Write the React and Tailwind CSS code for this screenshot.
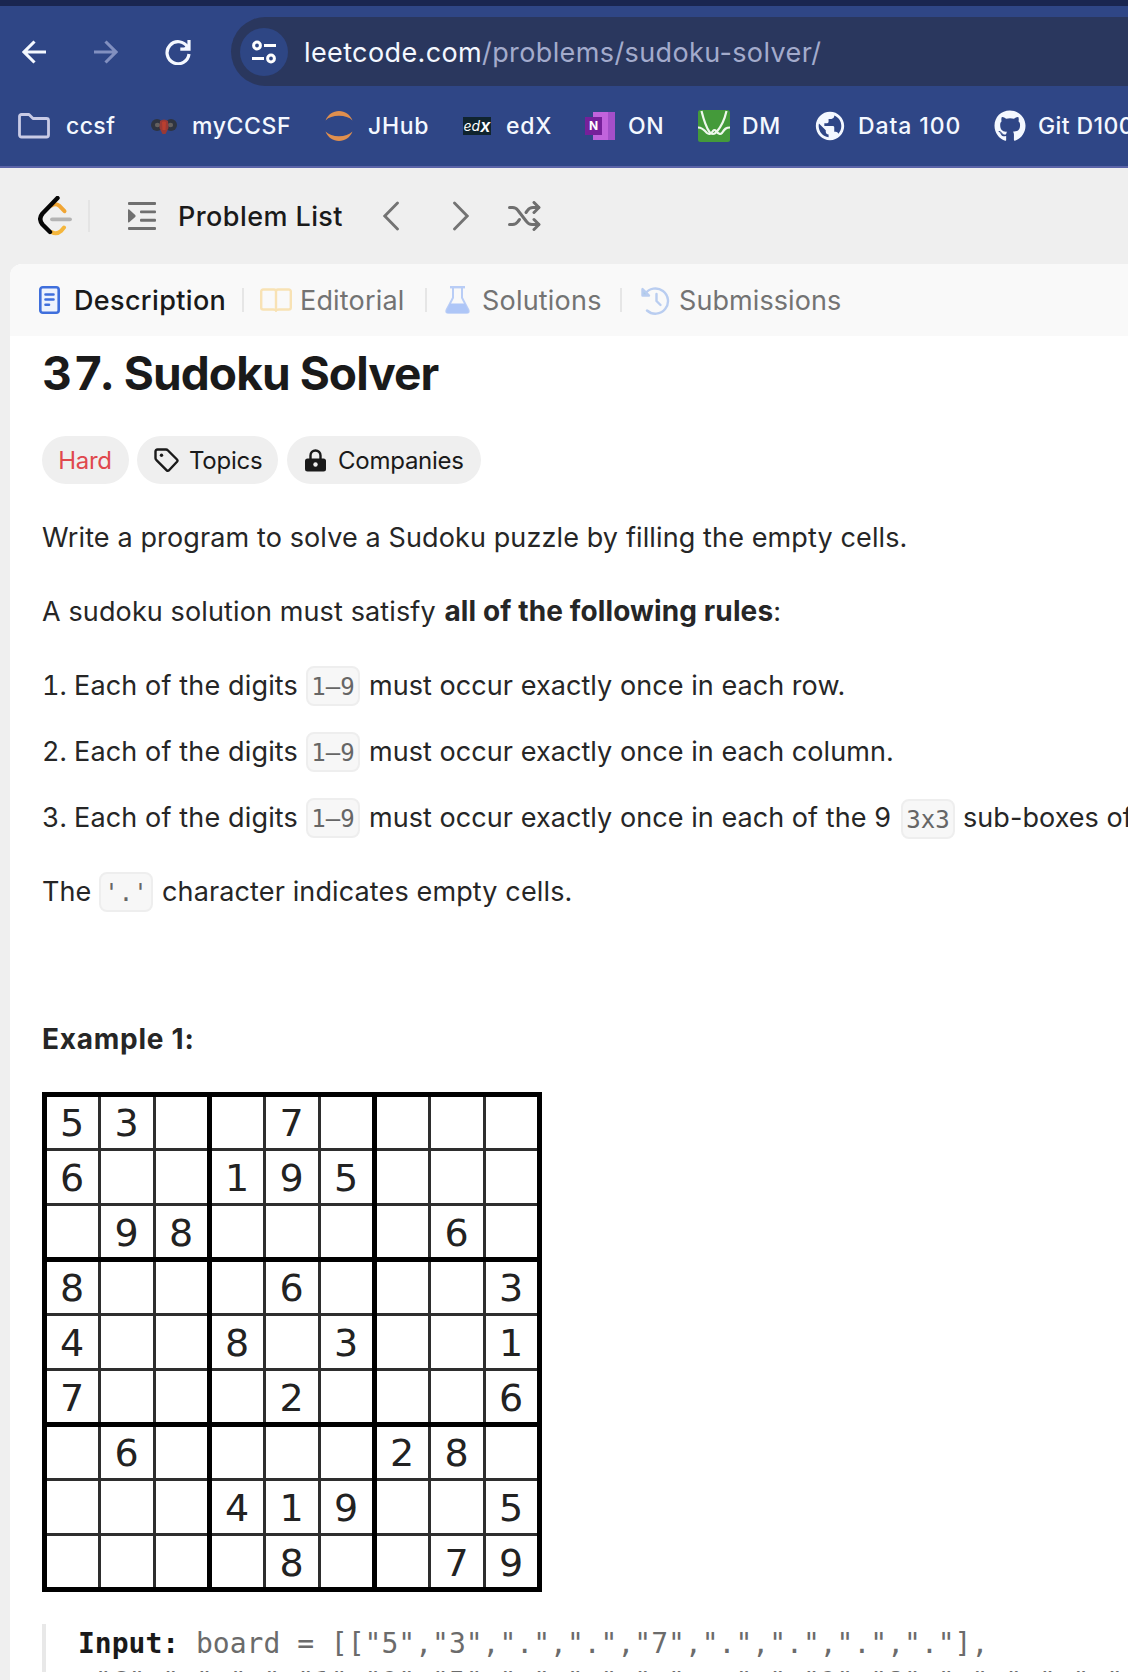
import { FaGithub } from "react-icons/fa";
import { MdPublic } from "react-icons/md";

/* ---------- icons ---------- */

const BackIcon = () => (
  <svg className="h-6 w-6" viewBox="0 0 24 24" fill="none" stroke="currentColor" strokeWidth="3.1">
    <path d="M24 12H2.5M12.5 1.5 2 12l10.500 10.500" />
  </svg>
);

const ForwardIcon = () => (
  <svg className="h-6 w-6" viewBox="0 0 24 24" fill="none" stroke="currentColor" strokeWidth="3.1">
    <path d="M0 12h21.500M11.500 1.500 22 12 11.500 22.500" />
  </svg>
);

const ReloadIcon = () => (
  <svg className="h-[26px] w-[26px]" viewBox="0 0 26 26" fill="none" stroke="currentColor" strokeWidth="3.2">
    <path d="M22.600 8.200A11 11 0 1 0 24 15" />
    <path d="M24 1v9.200h-8.700" />
    <path d="M24 4v6h-6z" fill="currentColor" stroke="none" />
  </svg>
);

const TuneIcon = () => (
  <svg className="h-6 w-6" viewBox="0 0 24 24" fill="none" stroke="white" strokeWidth="3">
    <circle cx="5" cy="5.500" r="3.400" />
    <path d="M12 5.500h12M0 18.500h12" />
    <circle cx="19" cy="18.500" r="3.400" />
  </svg>
);

const FolderIcon = () => (
  <svg className="h-[26px] w-8" viewBox="0 0 32 26" fill="none" stroke="#c9cbe6" strokeWidth="2.800" strokeLinejoin="round">
    <path d="M1.500 3.500a2 2 0 0 1 2-2h7.500l4 4h13.500a2 2 0 0 1 2 2v14.500a2 2 0 0 1-2 2h-25a2 2 0 0 1-2-2z" />
  </svg>
);

const RamIcon = () => (
  <svg className="h-5 w-[26px]" viewBox="0 0 26 20">
    <ellipse cx="6" cy="9" rx="6" ry="6" fill="#2f3440" />
    <ellipse cx="20" cy="9" rx="6" ry="6" fill="#2f3440" />
    <ellipse cx="6.500" cy="9" rx="2.600" ry="2.200" fill="#63605f" />
    <ellipse cx="19.500" cy="9" rx="2.600" ry="2.200" fill="#63605f" />
    <path d="M9 5q4-3 8 0l.5 7-3 6h-3l-3-6z" fill="#9a3935" />
    <path d="M11 6q2-1.500 4 0l-.5 8h-3z" fill="#bb3f2f" />
  </svg>
);

const JupyterIcon = () => (
  <svg className="h-[30px] w-7" viewBox="0 0 28 30" fill="#e08f4e">
    <path d="M0.500 9.500C3 3.500 8 0 14 0s11 3.500 13.500 9.500C24.500 6.300 19.500 4.800 14 4.800S3.500 6.300.5 9.500z" />
    <path d="M0.500 20.500C3 26.500 8 30 14 30s11-3.500 13.500-9.500C24.500 23.700 19.500 25.200 14 25.200S3.500 23.700.5 20.500z" />
  </svg>
);

const OneNoteIcon = () => (
  <div className="ml-0.5 flex h-7 w-[30px] items-center bg-[linear-gradient(90deg,transparent_25%,#c163dc_25%,#c163dc_76%,#a44fc9_76%)]">
    <span className="flex h-[18px] w-[17px] items-center justify-center bg-[#76209a] text-[12px] leading-none font-bold text-white">
      N
    </span>
  </div>
);

const DesmosIcon = () => (
  <svg className="h-8 w-8" viewBox="0 0 32 32">
    <rect width="32" height="32" rx="2.500" fill="#449a3a" />
    <g fill="none" stroke="#eef8ec" strokeWidth="2.2">
      <path d="M3.500 1C6 11 8 17 11.500 22q3.500 4 7 0C23 17 26.500 10 28.500 1" />
      <path d="M0 17.500c4 0 6 2 9 5.500q3 2.500 6-2 1.500-2 3 0 3.500 4.500 6 2C26.500 19 28 17.500 32 17.500" />
    </g>
  </svg>
);

const LeetCodeLogo = () => (
  <svg className="h-10 w-[34px]" viewBox="0 0 34 40" fill="none" strokeLinecap="round">
    <path d="M13.500 9.500q4-2.600 8 .4l5 5.300" stroke="#f0a534" strokeWidth="4" />
    <path d="M26 31.500l-3 3.500q-4.500 4-9.500 1" stroke="#f4b63c" strokeWidth="4" />
    <path d="M14 23.300h18" stroke="#b3b3b3" strokeWidth="3.800" />
    <path d="M19.500 2 4.500 17.500q-4.500 5.500 0 11l7.500 7.500" stroke="#060606" strokeWidth="4.400" strokeLinejoin="round" />
  </svg>
);

const ListIcon = () => (
  <svg className="h-7 w-7" viewBox="0 0 28 28" fill="#6f6f6f">
    <rect width="28" height="2.900" rx="1" />
    <rect x="12" y="8.400" width="16" height="2.900" rx="1" />
    <rect x="12" y="16.800" width="16" height="2.900" rx="1" />
    <rect y="25" width="28" height="2.900" rx="1" />
    <path d="M0 8.200q0-1.500 1.200-.6l6 5.300q1 1 0 2l-6 5.300Q0 21.100 0 19.600z" />
  </svg>
);

const ChevronLeft = () => (
  <svg className="h-[30px] w-4" viewBox="0 0 16 30" fill="none" stroke="#737373" strokeWidth="2.800" strokeLinecap="round">
    <path d="M14.500 2 1.800 15l12.700 13" />
  </svg>
);

const ChevronRight = () => (
  <svg className="h-[30px] w-4" viewBox="0 0 16 30" fill="none" stroke="#737373" strokeWidth="2.800" strokeLinecap="round">
    <path d="M1.500 2 14.200 15l-12.700 13" />
  </svg>
);

const ShuffleIcon = () => (
  <svg className="h-[30px] w-[33px]" viewBox="0 0 33 30" fill="none" stroke="#6f6f6f" strokeWidth="3" strokeLinecap="round" strokeLinejoin="round">
    <path d="M1.500 6.500h3q3.500 0 5.500 3l8.500 11q2 3 5.500 3h6.500" />
    <path d="M1.500 23.500h3q3.500 0 5.500-3l1.500-2M18 11.500l1.500-2q2-3 5.500-3h5.500" />
    <path d="M26 1.500l5 5-5 5M26 18.500l5 5-5 5" />
  </svg>
);

const DescriptionIcon = () => (
  <svg className="h-7 w-[21px]" viewBox="0 0 21 28" fill="none" stroke="#3f6fdc" strokeWidth="2.600" strokeLinecap="round">
    <rect x="1.300" y="1.300" width="18.400" height="25.400" rx="2.500" fill="#eef3fd" />
    <path d="M6.500 8.500h8M6.500 13.500h8M6.500 18.800h3.500" />
  </svg>
);

const BookIcon = () => (
  <svg className="h-6 w-8" viewBox="0 0 32 24" fill="none" stroke="#f8e2b4" strokeWidth="2.400" strokeLinejoin="round">
    <path d="M16 3.500Q16 1.500 14 1.500H3.200A2 2 0 0 0 1.200 3.500v16a2 2 0 0 0 2 2H13q3 0 3 1.300 0-1.300 3-1.300h9.800a2 2 0 0 0 2-2v-16a2 2 0 0 0-2-2H18q-2 0-2 2zM16 3.500v19" />
  </svg>
);

const FlaskIcon = () => (
  <svg className="h-7 w-[25px]" viewBox="0 0 25 28">
    <path d="M8 1.200v10.500L1.600 24q-1 2.800 1.800 2.800h18.200q2.800 0 1.800-2.800L17 11.700V1.200" fill="none" stroke="#b9cdf6" strokeWidth="2" />
    <path d="M5 1.200h15" stroke="#b9cdf6" strokeWidth="2.400" />
    <path d="M5 17.500h15l3.500 7.500q.5 2-2 2h-18q-2.500 0-2-2z" fill="#aec6f7" />
  </svg>
);

const HistoryIcon = () => (
  <svg className="h-[29px] w-[29px]" viewBox="0 0 29 29" fill="none" stroke="#b9cdf0" strokeWidth="2.400" strokeLinecap="round" strokeLinejoin="round">
    <path d="M4 8A12.600 12.600 0 1 1 6 24.500" />
    <path d="M1.500 3v6.500h6.500z" fill="#a9cbe6" />
    <path d="M15.500 8v7l4 4" />
  </svg>
);

const TagIcon = () => (
  <svg className="h-[25px] w-[25px]" viewBox="0 0 25 25" fill="none" stroke="#1a1a1a" strokeWidth="2.400" strokeLinejoin="round">
    <path d="M1.500 3.500q0-2 2-2H12q1 0 2 1l9 9q1 1 0 2.200l-8 8.600q-1.200 1-2.300 0l-10-10q-1.200-1-1.200-2z" />
    <circle cx="7.500" cy="7.300" r="1.700" fill="#1a1a1a" stroke="none" />
  </svg>
);

const LockIcon = () => (
  <svg className="h-[23px] w-[21px]" viewBox="0 0 21 23">
    <path d="M5.500 11V6.500a5 5 0 0 1 10 0V11" fill="none" stroke="#1a1a1a" strokeWidth="2.400" />
    <rect y="9.500" width="21" height="13" rx="2.500" fill="#1a1a1a" />
    <circle cx="10.500" cy="15.500" r="2.200" fill="#efefef" />
  </svg>
);

/* ---------- browser chrome ---------- */

function Bookmark({ icon, label, slot, gap, tracking = "tracking-[0.4px]" }) {
  return (
    <div className={`flex shrink-0 items-center ${slot}`}>
      <div className={`flex h-8 shrink-0 items-center ${gap}`}>{icon}</div>
      <span className={`text-[23px] leading-8 font-medium ${tracking}`}>{label}</span>
    </div>
  );
}

function BrowserChrome() {
  return (
    <header className="h-[168px] border-t-[6px] border-b-2 border-t-[#1a2650] border-b-[#5b64a8] bg-[#2f4686] text-[#f4f8ff]">
      <div className="flex h-[91px] items-center pl-[22px]">
        <BackIcon />
        <div className="ml-12 text-[#8290c0]"><ForwardIcon /></div>
        <div className="ml-[47px]"><ReloadIcon /></div>
        <div className="ml-10 flex h-[69px] flex-1 items-center rounded-l-full bg-[#2a375e] pl-[9px]">
          <div className="flex h-12 w-12 items-center justify-center rounded-full bg-[#2e4684]">
            <TuneIcon />
          </div>
          <span className="ml-4 pt-0.5 text-[27px] leading-10 tracking-[0.38px]">
            leetcode.com<span className="text-[#a3abcc]">/problems/sudoku-solver/</span>
          </span>
        </div>
      </div>
      <nav className="flex h-[57px] items-center overflow-hidden pl-[18px] whitespace-nowrap">
        <Bookmark icon={<FolderIcon />} label="ccsf" slot="w-[133px]" gap="w-12" />
        <Bookmark icon={<RamIcon />} label="myCCSF" slot="w-[174px]" gap="w-[41px]" tracking="tracking-[0.6px]" />
        <Bookmark icon={<JupyterIcon />} label="JHub" slot="w-[138px]" gap="w-[43px]" tracking="tracking-[0.7px]" />
        <Bookmark
          icon={
            <span className="flex h-[18px] w-7 items-center justify-center bg-[#10242e] text-[14px] leading-none text-white italic">
              ed<b className="text-[18px] font-semibold">x</b>
            </span>
          }
          label="edX"
          slot="w-[120px]"
          gap="w-[43px]"
          tracking="tracking-[0.8px]"
        />
        <Bookmark icon={<OneNoteIcon />} label="ON" slot="w-[115px]" gap="w-[45px]" tracking="tracking-[0.6px]" />
        <Bookmark icon={<DesmosIcon />} label="DM" slot="w-[118px]" gap="w-11" tracking="tracking-[0.6px]" />
        <Bookmark
          icon={<MdPublic className="-ml-[3px] h-[34px] w-[34px]" />}
          label="Data 100"
          slot="w-[178px]"
          gap="w-[42px]"
          tracking="tracking-[0.9px]"
        />
        <Bookmark icon={<FaGithub className="h-8 w-8" />} label="Git D100" slot="w-[178px]" gap="w-11" />
      </nav>
    </header>
  );
}

/* ---------- page ---------- */

function ProblemNav() {
  return (
    <div className="flex h-24 items-center pl-[38px]">
      <LeetCodeLogo />
      <div className="ml-4 h-8 w-0.5 bg-[#e4e4e4]" />
      <div className="ml-[38px]"><ListIcon /></div>
      <span className="ml-[22px] w-[167px] pt-0.5 text-[27px] leading-10 font-medium tracking-[0.42px] whitespace-nowrap text-[#1a1a1a]">
        Problem List
      </span>
      <div className="ml-[38px]"><ChevronLeft /></div>
      <div className="ml-[54px]"><ChevronRight /></div>
      <div className="ml-[39px]"><ShuffleIcon /></div>
    </div>
  );
}

const TabDivider = () => <div className="h-6 w-0.5 shrink-0 bg-[#e6e6e6]" />;

function Tabs() {
  return (
    <div className="flex h-[72px] items-center rounded-tl-xl bg-[#f9f9f9] pl-[29px] text-[27px] leading-10 text-[#737373]">
      <DescriptionIcon />
      <span className="ml-[14px] w-[168px] pt-0.5 font-medium tracking-[0.35px] text-[#1a1a1a]">Description</span>
      <TabDivider />
      <div className="ml-4 w-10"><BookIcon /></div>
      <span className="w-[125px] pt-0.5 tracking-[0.18px]">Editorial</span>
      <TabDivider />
      <div className="ml-[18px] w-[37px]"><FlaskIcon /></div>
      <span className="w-[138px] pt-0.5 tracking-[0.2px]">Solutions</span>
      <TabDivider />
      <div className="ml-[19px] w-[38px]"><HistoryIcon /></div>
      <span className="pt-0.5 tracking-[0.08px]">Submissions</span>
    </div>
  );
}

const Code = ({ children }) => (
  <code className="inline-flex h-10 w-[54px] shrink-0 items-center justify-center rounded-lg border-2 border-[#eeeeee] bg-[#f7f7f7] pt-0.5 align-middle font-['DejaVu_Sans_Mono',monospace] text-[24px] leading-none text-[#666]">
    {children}
  </code>
);

function Rule({ n, children }) {
  return (
    <li className="flex h-[66px] items-center whitespace-nowrap">
      <span className="w-8 shrink-0 tabular-nums">{n}.</span>
      <span className="w-[232px] shrink-0 tracking-[0.15px]">Each of the digits</span>
      <Code>1–9</Code>
      <span className="ml-[9px] tracking-[0.06px]">{children}</span>
    </li>
  );
}

const BOARD = [
  "53..7....",
  "6..195...",
  ".98....6.",
  "8...6...3",
  "4..8.3..1",
  "7...2...6",
  ".6....28.",
  "...419..5",
  "....8..79",
];
const TRIPLE = [0, 1, 2];
const ROW_PADDING = ["pt-px", "pt-px", "pt-[3px]"];

/* Three by three boxes; wide gaps between boxes, thin gaps between cells. */
function Sudoku() {
  return (
    <div className="grid h-[500px] w-[500px] grid-cols-3 grid-rows-3 gap-[5px] bg-black p-[5px]">
      {TRIPLE.map((br) =>
        TRIPLE.map((bc) => (
          <div
            key={`${br}${bc}`}
            className="grid grid-cols-[51px_52px_51px] grid-rows-[51px_52px_51px] gap-[3px] bg-[#2e2e2e]"
          >
            {TRIPLE.map((r) =>
              TRIPLE.map((c) => {
                const ch = BOARD[br * 3 + r][bc * 3 + c];
                return (
                  <div
                    key={`${r}${c}`}
                    className={`flex items-center justify-center bg-white pr-px font-['DejaVu_Sans',sans-serif] text-[38px] leading-none text-[#222] ${ROW_PADDING[r]}`}
                  >
                    {ch === "." ? "" : ch}
                  </div>
                );
              })
            )}
          </div>
        ))
      )}
    </div>
  );
}

const quoted = (row) => row.split("").map((c) => `"${c}"`).join(",");

/* Only the tips of the quotes in the following row reach into the code block. */
const ClippedRow = ({ row }) => (
  <>
    <span className="text-transparent">[</span>
    {quoted(row)}
    <span className="text-transparent">]</span>,
  </>
);

export default function App() {
  return (
    <div className="h-[1680px] w-[1128px] overflow-hidden bg-[#efefef] font-['Inter',sans-serif]">
      <BrowserChrome />
      <ProblemNav />
      <main className="ml-2.5 h-[1416px] rounded-tl-xl bg-white text-[27px] leading-[42px] text-[#262626]">
        <Tabs />
        <div className="pl-8">
          <h1 className="pt-3 text-[46px] leading-[50px] font-bold tracking-[-0.9px] whitespace-nowrap text-[#1a1a1a]">
            <span className="tracking-[3.4px]">37.</span><span className="tracking-[-5.4px]"> </span>Sudoku Solver
          </h1>
          <div className="mt-[38px] flex gap-2 text-[24px] leading-none tracking-[-0.25px] text-[#1a1a1a]">
            <span className="flex h-12 w-[87px] items-center justify-center rounded-full bg-[#efefef] pt-0.5 pr-px text-[#e0484d]">Hard</span>
            <span className="flex h-12 w-[141px] items-center gap-[10px] rounded-full bg-[#efefef] pt-px pl-[17px]">
              <TagIcon />Topics
            </span>
            <span className="ml-px flex h-12 w-[194px] items-center gap-3 rounded-full bg-[#efefef] pt-px pl-[18px]">
              <LockIcon />Companies
            </span>
          </div>
          <p className="mt-[33px] tracking-[0.12px]">Write a program to solve a Sudoku puzzle by filling the empty cells.</p>
          <p className="mt-[31px] tracking-[0.12px]">
            A sudoku solution must satisfy <b className="ml-px text-[28px] tracking-[0.12px]">all of the following rules</b>:
          </p>
          <ol className="mt-5">
            <Rule n={1}>must occur exactly once in each row.</Rule>
            <Rule n={2}>must occur exactly once in each column.</Rule>
            <Rule n={3}>
              must occur exactly once in each of the 9
              <span className="mr-2 ml-2.5"><Code>3x3</Code></span>
              sub-boxes of
            </Rule>
          </ol>
          <p className="mt-[20px] flex items-center">
            <span className="w-[57px]">The</span>
            <Code>'.'</Code>
            <span className="ml-[9px] tracking-[0.13px]">character indicates empty cells.</span>
          </p>
          <p className="mt-[105px] text-[28px] font-bold tracking-[0.75px]">Example 1:</p>
          <div className="mt-8"><Sudoku /></div>
          <pre className="mt-8 h-12 overflow-hidden border-l-4 border-[#e8e8e8] pl-8 font-['DejaVu_Sans_Mono',monospace] text-[28px] leading-[39px] text-[#6b6b6b]">
            <b className="text-[#1a1a1a]">Input:</b> board = [[{quoted(BOARD[0])}],{"\n"}
            <ClippedRow row={BOARD[1]} />
            <ClippedRow row={BOARD[2]} />
          </pre>
        </div>
      </main>
    </div>
  );
}
